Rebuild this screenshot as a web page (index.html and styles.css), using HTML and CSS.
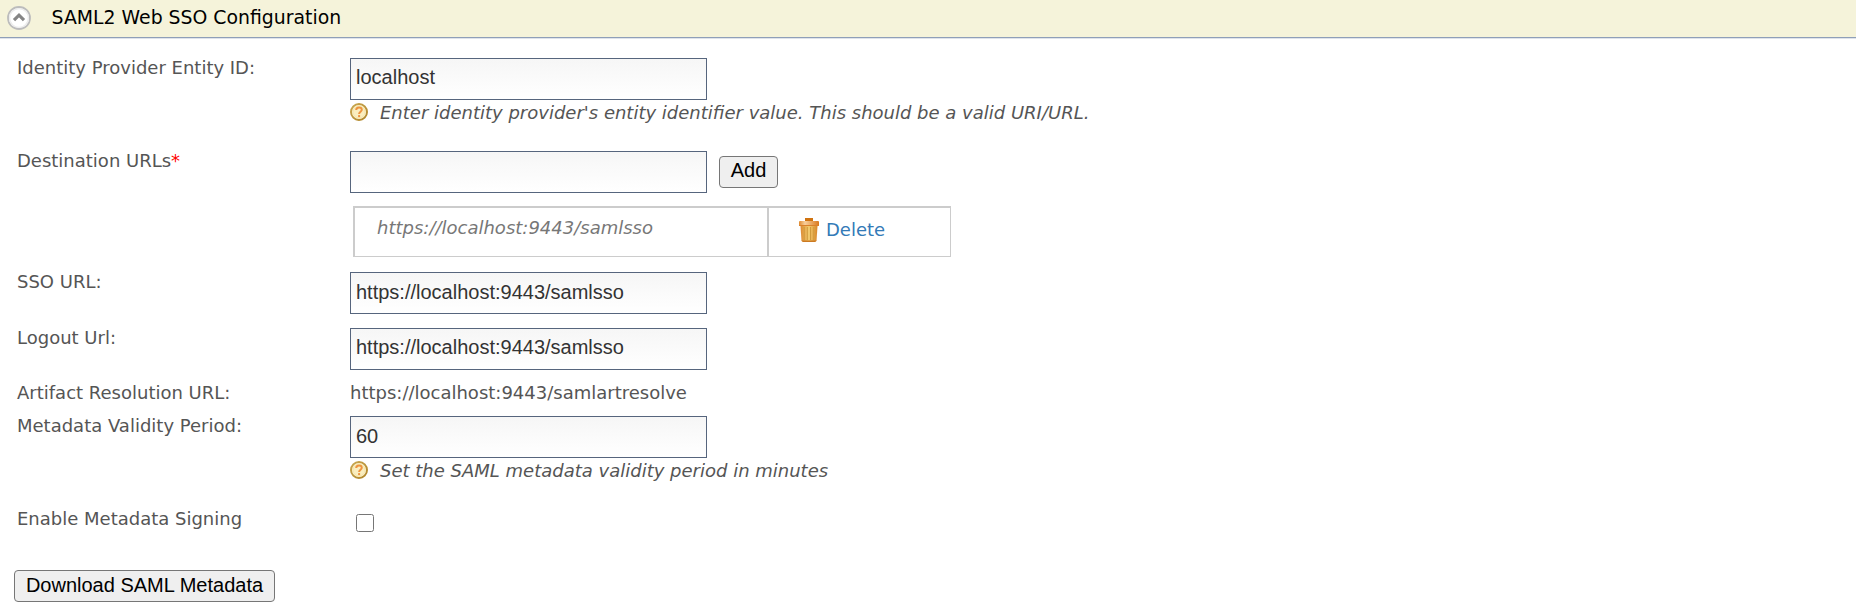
FILE: index.html
```html
<!DOCTYPE html>
<html lang="en">
<head>
<meta charset="utf-8">
<title>SAML2 Web SSO Configuration</title>
<link rel="stylesheet" href="styles.css">
</head>
<body>
<svg width="0" height="0" class="defs" aria-hidden="true">
  <defs>
    <linearGradient id="ring" x1="0" y1="0" x2="1" y2="1"><stop offset="0" stop-color="#c9a850"/><stop offset="1" stop-color="#b0852a"/></linearGradient>
    <linearGradient id="can" x1="0" y1="0" x2="1" y2="0"><stop offset="0" stop-color="#dc8a32"/><stop offset=".5" stop-color="#f2cc70"/><stop offset="1" stop-color="#d88628"/></linearGradient>
    <linearGradient id="lid" x1="0" y1="0" x2="1" y2="0"><stop offset="0" stop-color="#e08a30"/><stop offset=".3" stop-color="#f8cf9c"/><stop offset="1" stop-color="#d9781c"/></linearGradient>
    <symbol id="help" viewBox="0 0 18 18">
      <circle cx="9" cy="9" r="8" fill="#fffbe2" stroke="url(#ring)" stroke-width="2"/>
      <circle cx="9" cy="9" r="6.2" fill="#faeebf" stroke="#f3dfa0" stroke-width=".8"/>
      <path d="M6.2 7C6.2 5.2 7.3 4.4 9 4.4s2.8.9 2.8 2.4c0 1.8-2.7 2-2.7 4.1" fill="none" stroke="#ee9440" stroke-width="2"/>
      <rect x="8.1" y="12.1" width="2" height="2" fill="#ee9440"/>
    </symbol>
  </defs>
</svg>
<h2 class="section-title">
  <svg class="toggle" viewBox="0 0 24 24">
    <circle cx="12" cy="12" r="11" fill="#fff" stroke="#bcbcbc" stroke-width="1.8"/>
    <circle cx="12" cy="12" r="9.4" fill="none" stroke="#ececec" stroke-width="1.4"/>
    <path d="M7 14.2l5-5 5 5" fill="none" stroke="#858585" stroke-width="3.2"/>
  </svg>
  <span>SAML2 Web SSO Configuration</span>
</h2>
<form class="settings">
  <div class="row row-hint">
    <label class="label">Identity Provider Entity ID:</label>
    <div class="field"><input class="text" type="text" value="localhost">
      <div class="hint"><svg class="help"><use href="#help"/></svg><span>Enter identity provider's entity identifier value. This should be a valid URI/URL.</span></div>
    </div>
  </div>
  <div class="row row-urls">
    <label class="label">Destination URLs<span class="required">*</span></label>
    <div class="field">
      <div class="adder"><input class="text" type="text"><button class="button add" type="button">Add</button></div>
      <div class="url-list">
        <div class="url">https://localhost:9443/samlsso</div>
        <a class="delete"><svg class="trash" viewBox="0 0 20 24">
          <path d="M6 0h8v3H6z" fill="#d07310"/>
          <path d="M1.5 8h17l-1 15-1.5 1h-12l-1.5-1z" fill="url(#can)"/>
          <path d="M5.2 9v13M8.3 9v13M11.5 9v13M14.8 9v13" stroke="#d09a3c" stroke-width="1"/>
          <path d="M2.5 22.5h15l-1.5 1.5H4z" fill="#cc7a22"/>
          <rect y="3" width="20" height="5" rx="1" fill="url(#lid)"/>
          <path d="M0 7.5h20" stroke="#d9812b"/>
        </svg><span>Delete</span></a>
      </div>
    </div>
  </div>
  <div class="row row-input">
    <label class="label">SSO URL:</label>
    <div class="field"><input class="text low" type="text" value="https://localhost:9443/samlsso"></div>
  </div>
  <div class="row row-input">
    <label class="label">Logout Url:</label>
    <div class="field"><input class="text" type="text" value="https://localhost:9443/samlsso"></div>
  </div>
  <div class="row row-value">
    <label class="label">Artifact Resolution URL:</label>
    <div class="value">https://localhost:9443/samlartresolve</div>
  </div>
  <div class="row row-hint">
    <label class="label">Metadata Validity Period:</label>
    <div class="field"><input class="text low" type="text" value="60">
      <div class="hint"><svg class="help"><use href="#help"/></svg><span>Set the SAML metadata validity period in minutes</span></div>
    </div>
  </div>
  <div class="row row-check">
    <label class="label">Enable Metadata Signing</label>
    <input class="check" type="checkbox">
  </div>
  <button class="button download" type="button">Download SAML Metadata</button>
</form>
</body>
</html>
```
FILE: styles.css
```css
* { box-sizing: border-box; }
body {
  margin: 0;
  background: #fff;
  color: #555;
  font: 18px/21px "DejaVu Sans", Verdana, sans-serif;
}
.defs { display: block; }
.section-title {
  display: flex;
  height: 39px;
  margin: 0;
  padding: 6px 0 0 7px;
  gap: 20.6px;
  background: #f5f3da;
  border-bottom: 1px solid #dfe3ea;
  box-shadow: inset 0 -1px #8f9fb8;
  color: #000;
  font-size: 18.85px;
  font-weight: normal;
}
.section-title span { margin-top: 1px; }
.toggle { width: 24px; height: 24px; }
.settings { padding-top: 18px; }
.row {
  display: grid;
  grid-template-columns: 333px 1fr;
  align-items: start;
  padding-left: 17px;
}
.row-hint { height: 93px; }
.row-urls { height: 121px; }
.row-input { height: 56px; }
.row-value { height: 33px; margin-top: -1px; }
.row-check { height: 62px; }
.field { padding-top: 1px; }
.text {
  display: block;
  width: 357px;
  height: 42px;
  margin: 0;
  padding: 0 5px 3px;
  border: 1px solid #56657d;
  border-radius: 0;
  background: linear-gradient(#f6f6f6, #fff);
  color: #333;
  font: 20px "Liberation Sans", Arial, sans-serif;
}
.text.low { padding-bottom: 1px; }
.hint {
  display: flex;
  gap: 12px;
  margin-top: 2px;
  font-style: italic;
}
.help { width: 18px; height: 18px; margin-top: 1px; }
.required { color: #f00; }
.adder { display: flex; align-items: flex-start; gap: 12px; }
.button {
  height: 32px;
  border: 1px solid #767676;
  border-radius: 4px;
  background: #efefef;
  color: #000;
  font: 20px "Liberation Sans", Arial, sans-serif;
}
.add { width: 59px; margin-top: 5px; padding: 0 0 3px; }
.download { display: block; width: 261px; margin-left: 14px; padding: 0 0 1px; }
.url-list {
  display: grid;
  grid-template-columns: 412px 1fr;
  width: 598px;
  height: 51px;
  margin: 13px 0 0 3px;
  border: 1px solid #ccc;
  border-width: 2px 1px 1px 2px;
}
.url {
  padding: 9px 0 0 22px;
  color: #777;
  font-style: italic;
}
.delete {
  display: flex;
  gap: 7px;
  padding: 10px 0 0 30px;
  border-left: 2px solid #ccc;
  color: #337ab7;
}
.delete span { margin-top: 1px; }
.trash { width: 20px; height: 24px; }
.check { width: 18px; height: 18px; margin: 6px 0 0 6px; }
```
